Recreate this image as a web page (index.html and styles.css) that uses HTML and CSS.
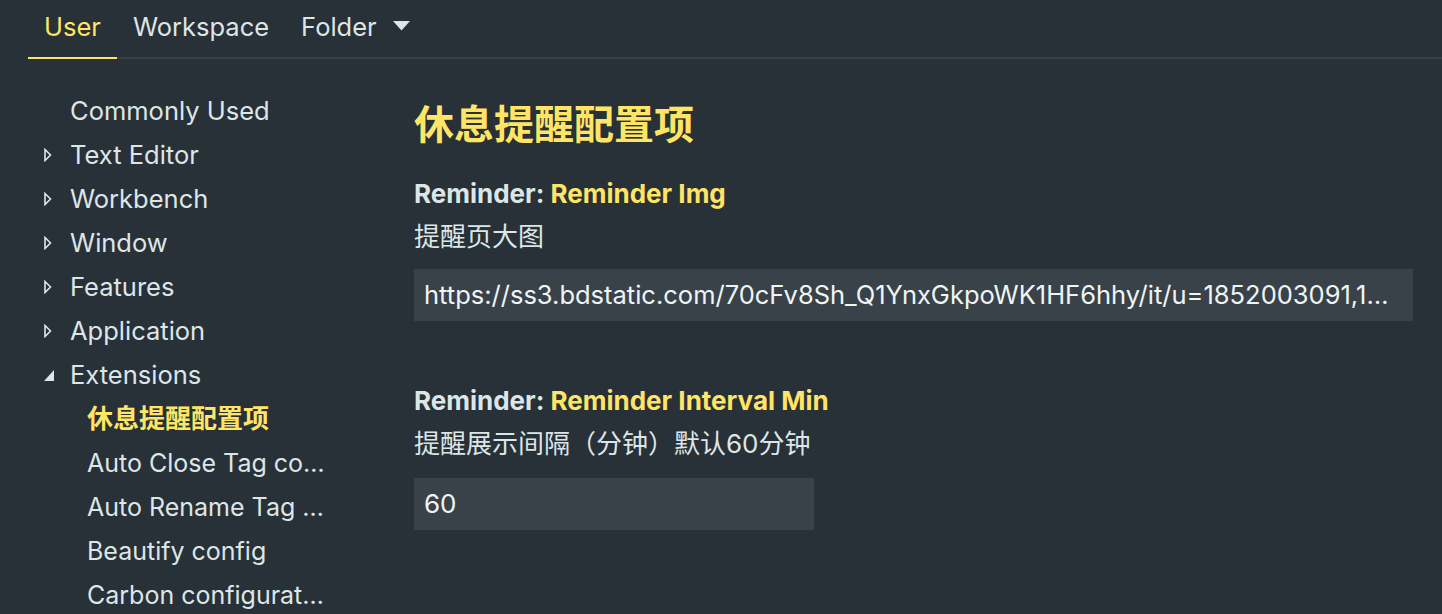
FILE: index.html
```html
<!DOCTYPE html>
<html lang="zh">
<head>
<meta charset="utf-8">
<title>Settings</title>
<link rel="stylesheet" href="styles.css">
</head>
<body>
<header class="tabs">
  <div class="tab active">User</div>
  <div class="tab">Workspace</div>
  <div class="tab folder">Folder
    <svg class="caret" width="17" height="10" viewBox="0 0 17 10"><path d="M0 0 H17 L8.5 9.5 Z" fill="#dde6e6"/></svg>
  </div>
</header>
<div class="main">
  <nav class="toc">
    <div class="item"><span class="tw"></span>Commonly Used</div>
    <div class="item"><span class="tw"><svg width="8" height="14" viewBox="0 0 8 14"><path d="M1 1.5 L6.5 7 L1 12.5 Z" fill="none" stroke="#dde6e6" stroke-width="1.6"/></svg></span>Text Editor</div>
    <div class="item"><span class="tw"><svg width="8" height="14" viewBox="0 0 8 14"><path d="M1 1.5 L6.5 7 L1 12.5 Z" fill="none" stroke="#dde6e6" stroke-width="1.6"/></svg></span>Workbench</div>
    <div class="item"><span class="tw"><svg width="8" height="14" viewBox="0 0 8 14"><path d="M1 1.5 L6.5 7 L1 12.5 Z" fill="none" stroke="#dde6e6" stroke-width="1.6"/></svg></span>Window</div>
    <div class="item"><span class="tw"><svg width="8" height="14" viewBox="0 0 8 14"><path d="M1 1.5 L6.5 7 L1 12.5 Z" fill="none" stroke="#dde6e6" stroke-width="1.6"/></svg></span>Features</div>
    <div class="item"><span class="tw"><svg width="8" height="14" viewBox="0 0 8 14"><path d="M1 1.5 L6.5 7 L1 12.5 Z" fill="none" stroke="#dde6e6" stroke-width="1.6"/></svg></span>Application</div>
    <div class="item"><span class="tw"><svg width="10" height="11" viewBox="0 0 10 11"><path d="M10 0 V11 H0 Z" fill="#dde6e6"/></svg></span>Extensions</div>
    <div class="item child selected">休息提醒配置项</div>
    <div class="item child">Auto Close Tag configuration</div>
    <div class="item child">Auto Rename Tag configuration</div>
    <div class="item child">Beautify config</div>
    <div class="item child">Carbon configuration</div>
  </nav>
  <section class="content">
    <h1 class="title">休息提醒配置项</h1>
    <div class="setting">
      <div class="label">Reminder: <span class="key">Reminder Img</span></div>
      <div class="desc">提醒页大图</div>
      <div class="input wide">https://ss3.bdstatic.com/70cFv8Sh_Q1YnxGkpoWK1HF6hhy/it/u=1852003091,1234567890&amp;fm=26&amp;gp=0.jpg</div>
    </div>
    <div class="setting second">
      <div class="label">Reminder: <span class="key">Reminder Interval Min</span></div>
      <div class="desc">提醒展示间隔（分钟）默认60分钟</div>
      <div class="input narrow">60</div>
    </div>
  </section>
</div>
</body>
</html>
```

FILE: styles.css
```css
html, body {
  margin: 0;
  padding: 0;
  height: 100%;
  overflow: hidden;
}
body {
  background: #283038;
  color: #dde6e6;
  font-family: Inter, "Noto Sans CJK SC", sans-serif;
  font-size: 25.5px;
}
.tabs {
  display: flex;
  margin-left: 28px;
  border-bottom: 2px solid #3b3f42;
}
.tab {
  padding: 12px 16px 15px;
  line-height: 30px;
  border-bottom: 2px solid transparent;
  margin-bottom: -2px;
  color: #dde6e6;
}
.tab.active {
  color: #ffe566;
  border-bottom-color: #ffe566;
}
.folder {
  display: flex;
  align-items: center;
  gap: 16px;
}
.caret {
  margin-top: -3px;
}
.main {
  display: flex;
}
.toc {
  width: 329px;
  flex: none;
  padding-top: 30px;
}
.item {
  display: flex;
  align-items: center;
  height: 44px;
  line-height: 44px;
  padding-left: 44px;
  white-space: nowrap;
  overflow: hidden;
}
.tw {
  width: 26px;
  flex: none;
  display: flex;
  align-items: center;
}
.item.child {
  padding-left: 87px;
  display: block;
  text-overflow: ellipsis;
  font-size: 25px;
}
.item.selected {
  color: #ffe566;
  font-weight: 700;
  font-size: 26px;
}
.content {
  margin-left: 85px;
  flex: 1;
  padding-top: 44px;
  padding-right: 29px;
  min-width: 0;
  font-size: 26px;
}
.title {
  margin: 0;
  font-size: 40px;
  line-height: 44px;
  font-weight: 700;
  color: #ffe566;
}
.setting {
  margin-top: 25px;
}
.setting.second {
  margin-top: 58px;
}
.label {
  font-weight: 700;
  font-size: 26px;
  line-height: 43px;
}
.key {
  color: #ffe566;
}
.desc {
  line-height: 44px;
}
.input {
  margin-top: 10px;
  background: #3a4249;
  height: 52px;
  line-height: 52px;
  padding: 0 10px;
  color: #eef5f5;
  font-size: 25.5px;
  white-space: nowrap;
  overflow: hidden;
  text-overflow: ellipsis;
  box-sizing: border-box;
}
.input.narrow {
  width: 400px;
  margin-top: 12px;
  font-size: 26px;
}
```
